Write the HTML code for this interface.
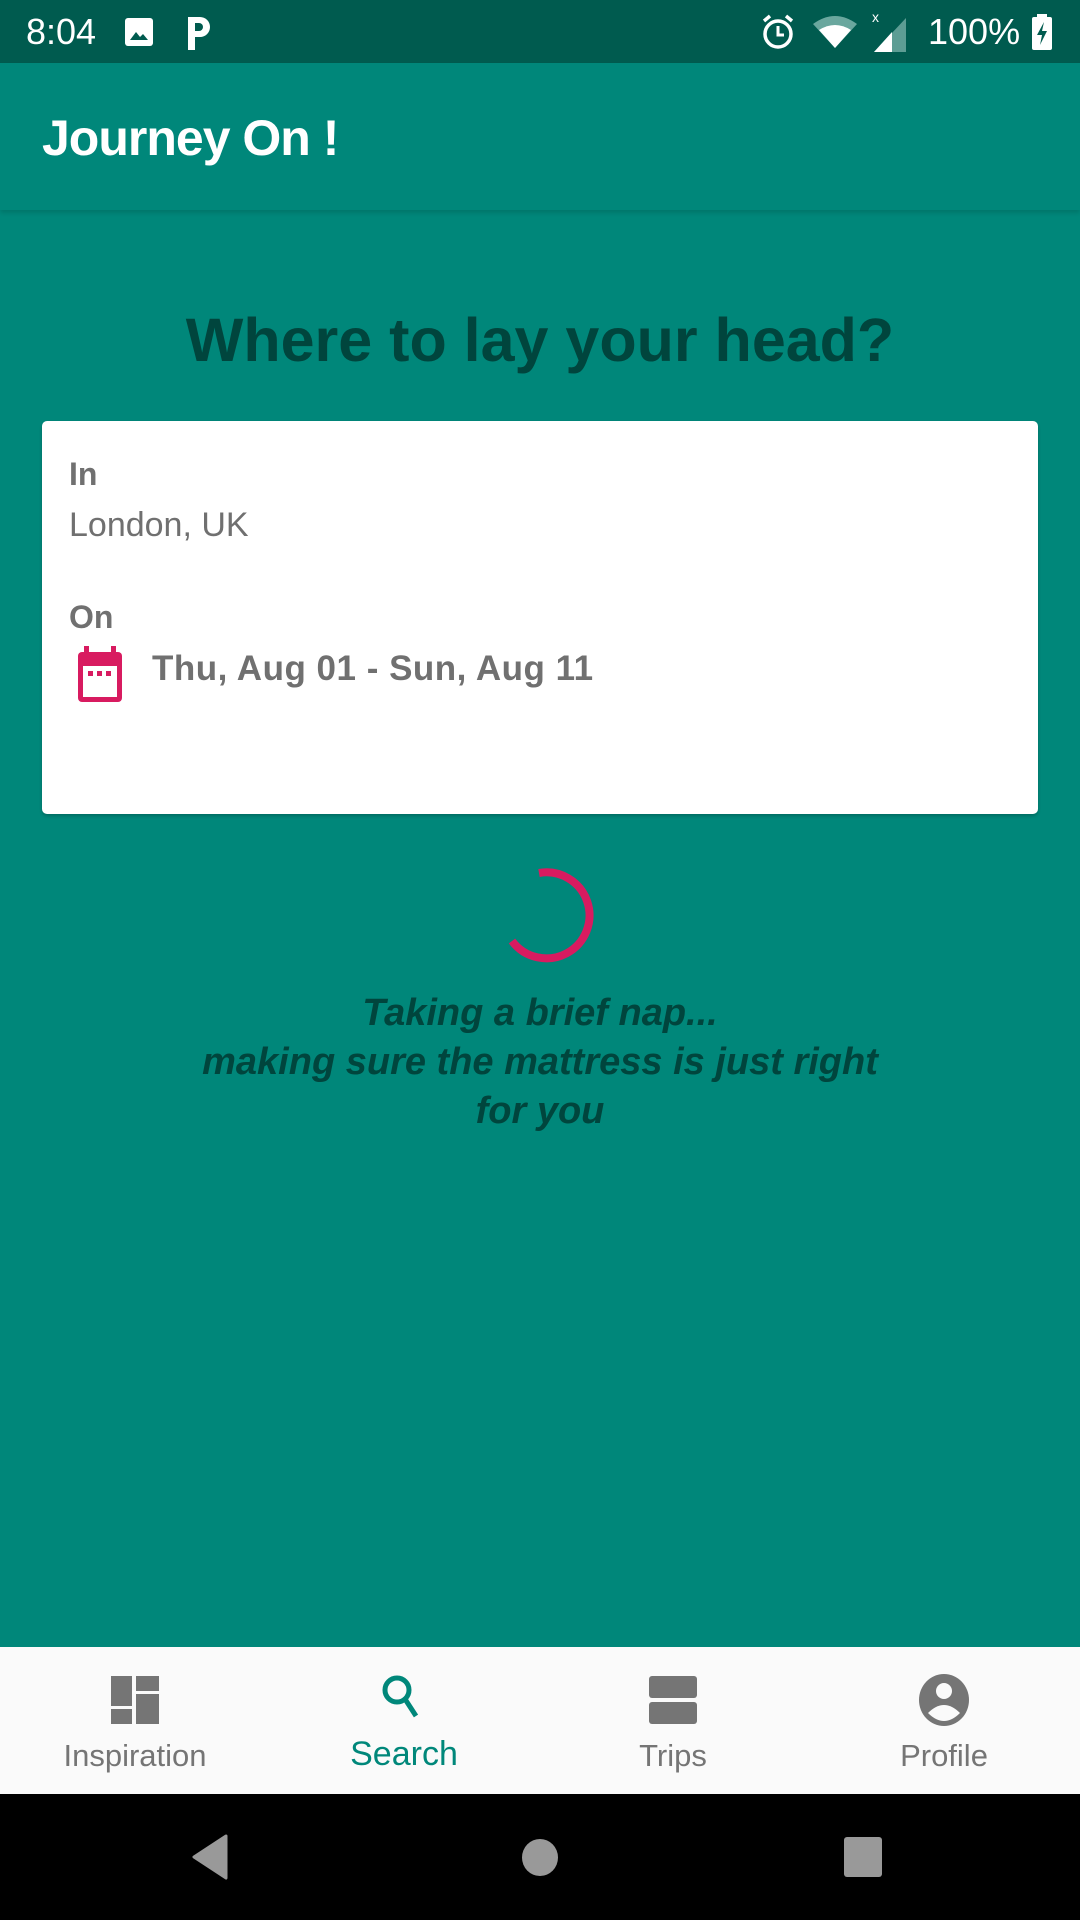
<!DOCTYPE html>
<html><head><meta charset="utf-8"><style>
*{margin:0;padding:0;box-sizing:border-box}
body{width:1080px;height:1920px;overflow:hidden;background:#00877a;font-family:"Liberation Sans",sans-serif;position:relative}
.abs{position:absolute}
</style></head><body>
<div class="abs" style="left:0;top:0;width:1080px;height:63px;background:#005b4f"></div>
<div class="abs" style="left:26px;top:10px;color:#fff;font-size:36px;line-height:44px">8:04</div>
<svg class="abs" style="left:124px;top:17px" width="30" height="30" viewBox="0 0 30 30"><rect x="1" y="1" width="28" height="28" rx="3" fill="#fff"/><path d="M6 23 L12 15 L16 20 L19 17 L24 23Z" fill="#005b4f"/></svg>
<svg class="abs" style="left:185px;top:14px" width="28" height="36" viewBox="0 0 28 36"><path d="M3 36 V3 H15 A10 10 0 0 1 15 23 H10 V36Z" fill="#fff"/><path d="M10 9 H14 A4 4 0 0 1 14 17 H10Z" fill="#005b4f"/></svg>
<svg class="abs" style="left:760px;top:12px" width="36" height="40" viewBox="0 0 36 40"><circle cx="18" cy="22" r="13" fill="none" stroke="#fff" stroke-width="3.5"/><path d="M18 14v9h6" fill="none" stroke="#fff" stroke-width="3"/><path d="M4 9l6-5M32 9l-6-5" stroke="#fff" stroke-width="3.5"/></svg>
<svg class="abs" style="left:810px;top:14px" width="50" height="36" viewBox="0 0 50 36"><path d="M3 10 Q25 -6 47 10 L25 34Z" fill="#6aa79e"/><path d="M9 16 Q25 6 41 16 L25 34Z" fill="#fff"/></svg>
<svg class="abs" style="left:870px;top:10px" width="40" height="42" viewBox="0 0 40 42"><path d="M36 8 V42 H4Z" fill="#5d9d94"/><path d="M22 22 V42 H4Z" fill="#fff"/><text x="2" y="12" font-size="14" fill="#fff" font-family="Liberation Sans">x</text></svg>
<div class="abs" style="left:928px;top:10px;color:#fff;font-size:36px;line-height:44px">100%</div>
<svg class="abs" style="left:1031px;top:14px" width="22" height="36" viewBox="0 0 22 36"><rect x="6" y="0" width="10" height="4" fill="#fff"/><rect x="1" y="3" width="20" height="33" rx="2" fill="#fff"/><path d="M13 8 L6 21 H11 L9 31 L16 17 H11Z" fill="#005b4f"/></svg>

<div class="abs" style="left:0;top:63px;width:1080px;height:147px;background:#00877a;box-shadow:0 3px 4px rgba(0,0,0,0.12)"></div>
<div class="abs" style="left:42px;top:108px;color:#fff;font-size:50px;font-weight:bold;line-height:60px;letter-spacing:-1px">Journey On !</div>

<div class="abs" style="left:0;top:300px;width:1080px;text-align:center;color:#00453d;font-size:61px;font-weight:bold;line-height:80px">Where to lay your head?</div>

<div class="abs" style="left:42px;top:421px;width:996px;height:393px;background:#fff;border-radius:5px;box-shadow:0 2px 3px rgba(0,0,0,0.2)"></div>
<div class="abs" style="left:69px;top:453px;color:#707070;font-size:32px;font-weight:bold;line-height:42px">In</div>
<div class="abs" style="left:69px;top:504px;color:#707070;font-size:34px;line-height:42px">London, UK</div>
<div class="abs" style="left:69px;top:596px;color:#707070;font-size:32px;font-weight:bold;line-height:42px">On</div>
<svg class="abs" style="left:76px;top:646px" width="48" height="56" viewBox="0 0 48 56"><rect x="8" y="0" width="5" height="10" fill="#d81b60"/><rect x="35" y="0" width="5" height="10" fill="#d81b60"/><rect x="2" y="6" width="44" height="50" rx="4" fill="#d81b60"/><rect x="7" y="20" width="34" height="31" fill="#fff"/><rect x="12" y="25" width="5" height="5" fill="#d81b60"/><rect x="21" y="25" width="5" height="5" fill="#d81b60"/><rect x="30" y="25" width="5" height="5" fill="#d81b60"/></svg>
<div class="abs" style="left:152px;top:648px;color:#707070;font-size:35px;font-weight:bold;line-height:42px;letter-spacing:0.5px">Thu, Aug 01 - Sun, Aug 11</div>

<svg class="abs" style="left:497px;top:866px" width="100" height="100" viewBox="0 0 100 100"><path d="M42 7 A43 43 0 1 1 15 75" fill="none" stroke="#d81b60" stroke-width="8"/></svg>
<div class="abs" style="left:0;top:989px;width:1080px;text-align:center;color:#00453d;font-size:38px;font-weight:bold;font-style:italic;line-height:49px">Taking a brief nap...<br>making sure the mattress is just right<br>for you</div>

<div class="abs" style="left:0;top:1647px;width:1080px;height:147px;background:#fafafa"></div>
<svg class="abs" style="left:111px;top:1676px" width="48" height="48" viewBox="0 0 48 48"><rect x="0" y="0" width="21" height="30" fill="#757575"/><rect x="0" y="33" width="21" height="15" fill="#757575"/><rect x="25" y="0" width="23" height="15" fill="#757575"/><rect x="25" y="18" width="23" height="30" fill="#757575"/></svg>
<svg class="abs" style="left:380px;top:1671px" width="50" height="50" viewBox="0 0 50 50"><circle cx="17" cy="19" r="12" fill="none" stroke="#00877a" stroke-width="5"/><path d="M25 28 L36 45" stroke="#00877a" stroke-width="5"/></svg>
<svg class="abs" style="left:648px;top:1676px" width="50" height="48" viewBox="0 0 50 48"><rect x="1" y="0" width="48" height="22" rx="3" fill="#757575"/><rect x="1" y="26" width="48" height="22" rx="3" fill="#757575"/></svg>
<svg class="abs" style="left:918px;top:1673px" width="52" height="54" viewBox="0 0 52 54"><ellipse cx="26" cy="27" rx="25" ry="26" fill="#757575"/><circle cx="26" cy="18" r="8" fill="#fafafa"/><path d="M10 40 Q26 24 42 40 Q26 56 10 40Z" fill="#fafafa"/></svg>
<div class="abs" style="left:35px;top:1734px;width:200px;text-align:center;color:#757575;font-size:31px;line-height:44px">Inspiration</div>
<div class="abs" style="left:304px;top:1732px;width:200px;text-align:center;color:#00877a;font-size:34px;line-height:44px">Search</div>
<div class="abs" style="left:573px;top:1734px;width:200px;text-align:center;color:#757575;font-size:31px;line-height:44px">Trips</div>
<div class="abs" style="left:844px;top:1734px;width:200px;text-align:center;color:#757575;font-size:31px;line-height:44px">Profile</div>

<div class="abs" style="left:0;top:1794px;width:1080px;height:126px;background:#000"></div>
<svg class="abs" style="left:190px;top:1834px" width="40" height="46" viewBox="0 0 40 46"><path d="M36 2 L4 23 L36 44Z" fill="#999" stroke="#999" stroke-width="3" stroke-linejoin="round"/></svg>
<div class="abs" style="left:522px;top:1839px;width:36px;height:37px;border-radius:50%;background:#999"></div>
<div class="abs" style="left:844px;top:1837px;width:38px;height:40px;border-radius:3px;background:#999"></div>
</body></html>
